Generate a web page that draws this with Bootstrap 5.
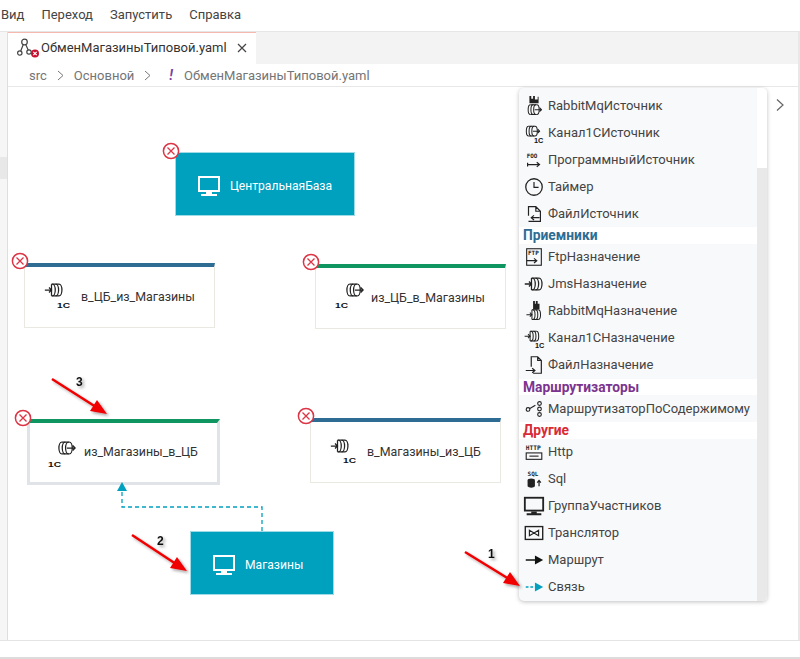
<!DOCTYPE html>
<html lang="ru">
<head>
<meta charset="utf-8">
<title>ОбменМагазиныТиповой.yaml</title>
<link href="https://cdn.jsdelivr.net/npm/bootstrap@5.3.0/dist/css/bootstrap.min.css" rel="stylesheet">
<style>
html,body{height:100%;}
body{width:800px;height:659px;overflow:hidden;background:#fff;font-family:Roboto,"Liberation Sans",sans-serif;color:#3c3c3c;font-size:13px;}
.app-shell{width:800px;height:659px;border-bottom:2px solid #dcdcdc;}
.menu-bar{height:31px;flex:none;padding-left:1px;gap:17px;font-size:13px;line-height:30px;color:#444;}
.workbench{height:609px;flex:none;border-top:1px solid #e6e6e6;}
.side-strip{width:8px;background:#f6f6f6;border-right:1px solid #dedede;}
.side-mark{width:7px;height:22px;margin-top:125px;background:#e8e8e8;}
.editor-col{border-right:2px solid #e8e8e8;min-width:0;}
.tab-row{height:32px;flex:none;background:#f3f3f3;}
.file-tab{width:248px;height:32px;background:#fff;border-top:1px solid #f6b9b0;padding-left:9px;font-size:13px;color:#333;padding-bottom:2px;}
.tab-glyph{width:24px;height:22px;flex:none;}
.close-x{margin-left:9px;}
.crumbs{height:23px;flex:none;padding-left:21px;padding-top:1px;font-size:13px;color:#757575;border-bottom:1px solid #e8e8e8;}
.crumb-sep{margin:0 10px;}
.bang{color:#7b3fa0;font-weight:700;font-style:italic;margin:0 11px 0 8px;font-size:14px;}
.canvas-area{flex:1 1 auto;}
.status-row{height:17px;flex:none;border-top:1px solid #e4e4e4;}
.node-sys{position:absolute;height:64px;padding:4px 0 0 21px;background:#00a0bf;color:#fff;font-size:12.1px;border:1px solid #9fdbe6;}
.sys-glyph{width:24px;height:24px;margin-right:9px;}
.node-ep{position:absolute;width:191px;height:65px;background:#fff;border:1px solid #e9e9e2;border-top:4px solid #2e6c94;font-size:12.4px;color:#333;}
.node-ep.green-top{border-top-color:#0f9660;}
.node-ep.picked{width:193px;height:66px;border:3px solid #e0e4e9;border-top:4px solid #0f9660;}
.ep-glyph{flex:none;margin-top:4px;}
.ep-label{margin-top:21px;}
.picked .ep-label{margin-top:20px;}
.err-dot{position:absolute;width:18px;height:18px;}
.overlay{position:absolute;left:-8px;top:-87px;pointer-events:none;}
.palette{position:absolute;left:511px;top:1px;width:248px;height:513px;background:#f8f9fb;border-radius:5px;box-shadow:0 1px 4px rgba(0,0,0,.25);overflow:hidden;}
.palette-list{width:238px;padding-top:4px;font-size:13px;color:#444;}
.pal-item{height:27px;padding-left:4px;gap:3px;white-space:nowrap;}
.pal-item svg{width:22px;height:22px;flex:none;}
.pal-mon{color:#222;}
.pal-head{height:16.5px;line-height:16px;background:#fff;padding-left:4px;font-weight:700;font-size:13.8px;}
.head-blue{color:#2e6c94;}
.head-purple{color:#7b3590;}
.head-red{color:#d92b35;}
.pal-track{position:absolute;right:0;top:0;bottom:0;width:10px;background:#fff;}
.pal-thumb{position:absolute;right:0;top:80px;bottom:0;width:10px;background:#e9e9e9;}
.more-chev{position:absolute;left:766px;top:11px;}
.i{fill:none;stroke:#222;stroke-width:1.5;}
.it{font-family:"DejaVu Sans Mono","Liberation Mono",monospace;font-weight:700;fill:#222;stroke:none;}
.tag1c{font-family:"Liberation Sans",sans-serif;font-weight:700;fill:#111;stroke:none;}
.num{font-family:"Liberation Sans",sans-serif;font-size:12px;font-weight:700;fill:#111;}
</style>
</head>
<body>
<svg width="0" height="0" class="position-absolute">
<defs>
<symbol id="err" viewBox="0 0 18 18"><circle cx="9" cy="9" r="7.6" fill="#fff" stroke="#dc3545" stroke-width="1.5"/><path d="M5.500 5.500l7 7M12.500 5.500l-7 7" stroke="#dc3545" stroke-width="1.300" fill="none"/></symbol>
<symbol id="monitor" viewBox="0 0 24 24"><rect x="2" y="3" width="20" height="14" fill="none" stroke="currentColor" stroke-width="2"/><path d="M9 18h6v2H9zM4 20h16v2H4z" fill="currentColor"/></symbol>
<symbol id="jms-in" viewBox="0 0 24 24"><g class="i"><path d="M1 12h8M6 9l3 3-3 3"/><path d="M9 5h9M9 19h9M9 5v14"/><path d="M10 5a3.500 7 0 0 1 0 14M14 5a3.500 7 0 0 1 0 14M18 5a3.500 7 0 0 1 0 14"/></g></symbol>
<symbol id="jms-out" viewBox="0 0 24 24"><g class="i"><path d="M7 5h9M7 19h9"/><path d="M7 5a3.500 7 0 0 0 0 14M11 5a3.500 7 0 0 0 0 14M15 5a3.500 7 0 0 0 0 14M16 5a3.500 7 0 0 1 0 14"/><path d="M13 12h10M20 9l3 3-3 3"/></g></symbol>
</defs>
</svg>
<div class="app-shell d-flex flex-column">
  <div class="menu-bar d-flex"><span>Вид</span><span>Переход</span><span>Запустить</span><span>Справка</span></div>
  <div class="workbench d-flex">
    <div class="side-strip"><div class="side-mark"></div></div>
    <div class="editor-col flex-grow-1 d-flex flex-column">
      <div class="tab-row d-flex">
        <div class="file-tab d-flex align-items-center">
          <svg class="tab-glyph" viewBox="0 0 24 22"><g fill="none" stroke="#444" stroke-width="1.200"><circle cx="7.500" cy="5" r="2.800"/><circle cx="2.800" cy="16" r="2.200"/><circle cx="12" cy="15" r="2.200"/><path d="M6.300 7.500L3.700 14M8.700 7.500l2.500 5.500"/></g><circle cx="18" cy="16.500" r="4" fill="#c8102e"/><path d="M16.300 14.800l3.400 3.400M19.700 14.800l-3.400 3.400" stroke="#fff" stroke-width="1.200"/></svg>
          <span>ОбменМагазиныТиповой.yaml</span>
          <svg class="close-x" width="12" height="12" viewBox="0 0 12 12"><path d="M2 2l8 8M10 2l-8 8" stroke="#444" stroke-width="1.200"/></svg>
        </div>
      </div>
      <div class="crumbs d-flex align-items-center"><span>src</span><svg class="crumb-sep" width="7" height="11" viewBox="0 0 7 11"><path d="M1 1l5 4.500-5 4.500" fill="none" stroke="#777"/></svg><span>Основной</span><svg class="crumb-sep" width="7" height="11" viewBox="0 0 7 11"><path d="M1 1l5 4.500-5 4.500" fill="none" stroke="#777"/></svg><span class="bang">!</span><span>ОбменМагазиныТиповой.yaml</span></div>
      <div class="canvas-area position-relative">
        <div class="node-sys d-flex align-items-center" style="left:167px;top:65px;width:180px;"><svg class="sys-glyph"><use href="#monitor"/></svg>ЦентральнаяБаза</div>
        <svg class="err-dot" style="left:154px;top:55px"><use href="#err"/></svg>

        <div class="node-ep d-flex" style="left:16px;top:176px;"><svg class="ep-glyph" width="37" height="42" viewBox="0 0 37 42" style="margin-left:19px"><use href="#jms-in" x="0" y="9" width="20" height="20"/><text class="tag1c" x="13" y="37" font-size="8" textLength="13" lengthAdjust="spacingAndGlyphs">1С</text></svg><span class="ep-label">в_ЦБ_из_Магазины</span></div>
        <svg class="err-dot" style="left:3px;top:165px"><use href="#err"/></svg>

        <div class="node-ep green-top d-flex" style="left:307px;top:177px;"><svg class="ep-glyph" width="36" height="42" viewBox="0 0 36 42" style="margin-left:19px"><use href="#jms-out" x="9" y="8" width="20" height="20"/><text class="tag1c" x="0" y="36" font-size="8" textLength="13" lengthAdjust="spacingAndGlyphs">1С</text></svg><span class="ep-label">из_ЦБ_в_Магазины</span></div>
        <svg class="err-dot" style="left:294px;top:166px"><use href="#err"/></svg>

        <div class="node-ep picked d-flex" style="left:19px;top:332px;"><svg class="ep-glyph" width="36" height="46" viewBox="0 0 36 46" style="margin-left:18px"><use href="#jms-out" x="8" y="11" width="20" height="20"/><text class="tag1c" x="0" y="40" font-size="8" textLength="13" lengthAdjust="spacingAndGlyphs">1С</text></svg><span class="ep-label">из_Магазины_в_ЦБ</span></div>
        <svg class="err-dot" style="left:6px;top:322px"><use href="#err"/></svg>

        <div class="node-ep d-flex" style="left:302px;top:331px;"><svg class="ep-glyph" width="37" height="42" viewBox="0 0 37 42" style="margin-left:19px"><use href="#jms-in" x="0" y="10" width="20" height="20"/><text class="tag1c" x="13" y="37" font-size="8" textLength="13" lengthAdjust="spacingAndGlyphs">1С</text></svg><span class="ep-label">в_Магазины_из_ЦБ</span></div>
        <svg class="err-dot" style="left:289px;top:320px"><use href="#err"/></svg>

        <div class="node-sys d-flex align-items-center" style="left:182px;top:444px;width:144px;"><svg class="sys-glyph"><use href="#monitor"/></svg>Магазины</div>

        <svg class="more-chev" width="12" height="14" viewBox="0 0 12 14"><path d="M3 1.500l6 5.500-6 5.500" fill="none" stroke="#666" stroke-width="1.200"/></svg>

        <div class="palette">
          <div class="pal-track"></div><div class="pal-thumb"></div>
          <div class="palette-list position-relative">
            <div class="pal-item d-flex align-items-center"><svg viewBox="0 0 24 24"><path d="M7 1h2v3h2V1h2v4h3V2h1v7H7z" fill="#222"/><use href="#jms-out" x="3" y="7" width="18" height="18"/></svg>RabbitMqИсточник</div>
            <div class="pal-item d-flex align-items-center"><svg viewBox="0 0 24 24"><use href="#jms-out" x="1" y="1" width="18" height="18"/><text class="tag1c" x="12" y="23" font-size="8">1С</text></svg>Канал1СИсточник</div>
            <div class="pal-item d-flex align-items-center"><svg viewBox="0 0 24 24"><text class="it" x="4" y="10" font-size="6.500">FOO</text><path d="M5 17h13M5 15v4M15 14.500l3 2.500-3 2.500" fill="none" stroke="#222" stroke-width="1.300"/></svg>ПрограммныйИсточник</div>
            <div class="pal-item d-flex align-items-center"><svg viewBox="0 0 24 24"><circle cx="12" cy="12" r="9" fill="none" stroke="#222" stroke-width="1.400"/><path d="M12 6.500v6h5" fill="none" stroke="#222" stroke-width="1.300"/></svg>Таймер</div>
            <div class="pal-item d-flex align-items-center"><svg viewBox="0 0 24 24"><path d="M6 14V4h8l5 5v11H6M14 4v5h5M9 16h9M12 13.500L9 16l3 2.500" fill="none" stroke="#222" stroke-width="1.300"/></svg>ФайлИсточник</div>
            <div class="pal-head head-blue">Приемники</div>
            <div class="pal-item d-flex align-items-center"><svg viewBox="0 0 24 24"><rect x="4" y="3" width="16" height="18" fill="none" stroke="#222" stroke-width="1.200"/><text class="it" x="5.500" y="10" font-size="6.500">FTP</text><path d="M4 16h11M12 13.500l3 2.500-3 2.500" fill="none" stroke="#222" stroke-width="1.300"/></svg>FtpНазначение</div>
            <div class="pal-item d-flex align-items-center"><svg viewBox="0 0 24 24"><use href="#jms-in" x="1" y="1" width="22" height="22"/></svg>JmsНазначение</div>
            <div class="pal-item d-flex align-items-center"><svg viewBox="0 0 24 24"><path d="M11 1h2v3h1V1h2v3h2v6h-7z" fill="#222"/><use href="#jms-in" x="3" y="7" width="18" height="18"/></svg>RabbitMqНазначение</div>
            <div class="pal-item d-flex align-items-center"><svg viewBox="0 0 24 24"><use href="#jms-in" x="1" y="1" width="18" height="18"/><text class="tag1c" x="13" y="23" font-size="8">1С</text></svg>Канал1СНазначение</div>
            <div class="pal-item d-flex align-items-center"><svg viewBox="0 0 24 24"><path d="M9 14V3h7l4 4v14h-9M16 3v4h4M3 18h10M10 15.500l3 2.500-3 2.500" fill="none" stroke="#222" stroke-width="1.300"/></svg>ФайлНазначение</div>
            <div class="pal-head head-purple">Маршрутизаторы</div>
            <div class="pal-item d-flex align-items-center"><svg viewBox="0 0 24 24"><circle cx="5.500" cy="12.500" r="2" fill="none" stroke="#222" stroke-width="1.200"/><circle cx="18" cy="6" r="2" fill="none" stroke="#222" stroke-width="1.200"/><circle cx="18" cy="12" r="2" fill="none" stroke="#222" stroke-width="1.200"/><circle cx="18" cy="18" r="2" fill="none" stroke="#222" stroke-width="1.200"/><path d="M7.500 11.500l6-3.500" stroke="#222" stroke-width="1.200"/></svg>МаршрутизаторПоСодержимому</div>
            <div class="pal-head head-red">Другие</div>
            <div class="pal-item d-flex align-items-center"><svg viewBox="0 0 24 24"><text class="it" x="3" y="9.500" font-size="6.800">HTTP</text><rect x="3.500" y="13" width="17" height="7" fill="none" stroke="#222" stroke-width="1.200"/><path d="M7 16.500h10" stroke="#222" stroke-width="1.200"/></svg>Http</div>
            <div class="pal-item d-flex align-items-center"><svg viewBox="0 0 24 24"><text class="it" x="5" y="8.500" font-size="6.500">SQL</text><ellipse cx="9" cy="13.500" rx="4" ry="2" fill="#222"/><path d="M5 14v6c1 2 7 2 8 0v-6z" fill="#222"/><path d="M17.500 20v-6M15.500 16l2-2.500 2 2.500" fill="none" stroke="#222" stroke-width="1.300"/></svg>Sql</div>
            <div class="pal-item d-flex align-items-center"><svg class="pal-mon" viewBox="0 0 24 24"><use href="#monitor" x="0" y="0" width="24" height="24"/></svg>ГруппаУчастников</div>
            <div class="pal-item d-flex align-items-center"><svg viewBox="0 0 24 24"><rect x="2.500" y="5" width="19" height="14" fill="none" stroke="#222" stroke-width="1.500"/><path d="M7 9v6l5-3zM17 9v6l-5-3z" fill="none" stroke="#222" stroke-width="1.300"/></svg>Транслятор</div>
            <div class="pal-item d-flex align-items-center"><svg viewBox="0 0 24 24"><path d="M3 12h12" stroke="#111" stroke-width="1.800"/><path d="M13 7l9 5-9 5z" fill="#111"/></svg>Маршрут</div>
            <div class="pal-item d-flex align-items-center"><svg viewBox="0 0 24 24"><path d="M3 12h11" stroke="#00a0bf" stroke-width="1.800" stroke-dasharray="3 2"/><path d="M13 7l9 5-9 5z" fill="#00a0bf"/></svg>Связь</div>
          </div>
        </div>

        <svg class="overlay" width="800" height="659" viewBox="0 0 800 659">
          <defs><filter id="sh" x="-30%" y="-30%" width="160%" height="160%"><feDropShadow dx="2" dy="2" stdDeviation="1.500" flood-color="#000" flood-opacity=".35"/></filter></defs>
          <path d="M262 531V507H122V490" fill="none" stroke="#00a0bf" stroke-width="1.300" stroke-dasharray="4 3"/>
          <path d="M122 482l5 9h-10z" fill="#00a0bf"/>
          <g filter="url(#sh)" fill="#f00000" stroke="#f00000">
            <path d="M52 379L96 407" stroke-width="2.500"/><path d="M107 414L90 411 97 400z" stroke="none"/>
            <path d="M132 535L176 564" stroke-width="2.500"/><path d="M187 571L170 568 177 557z" stroke="none"/>
            <path d="M465 552L509 579" stroke-width="2.500"/><path d="M520 586L503 583 510 572z" stroke="none"/>
          </g>
          <g filter="url(#sh)">
            <text class="num" x="76" y="386">3</text>
            <text class="num" x="157" y="545">2</text>
            <text class="num" x="488" y="558">1</text>
          </g>
        </svg>
      </div>
    </div>
  </div>
  <div class="status-row"></div>
</div>
<script src="https://cdn.jsdelivr.net/npm/bootstrap@5.3.0/dist/js/bootstrap.bundle.min.js"></script>
</body>
</html>
